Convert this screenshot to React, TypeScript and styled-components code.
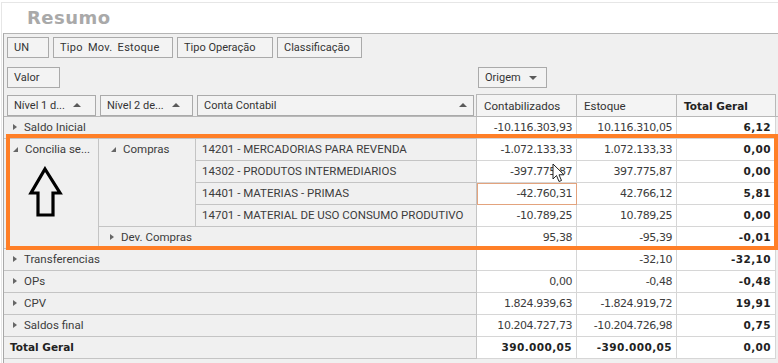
import React from "react";
import styled, { createGlobalStyle, css } from "styled-components";

const Global = createGlobalStyle`
  html, body { margin: 0; padding: 0; background: #ffffff; }
  body { font-family: Roboto, "Liberation Sans", Arial, sans-serif; color: #3a3a3a; }
  * { box-sizing: border-box; }
`;

const COLS = "95px 97px 281px 100px 100px 99px";

const Card = styled.div`
  position: relative;
  margin: 2px 0 0 1px;
  height: 361px;
  border-top: 1px solid #e6e6e6;
  border-left: 1px solid #e6e6e6;
  overflow: hidden;
`;

const Title = styled.div`
  height: 30px;
  line-height: 29px;
  padding-left: 25px;
  font-family: "DejaVu Sans", Verdana, sans-serif;
  font-weight: 700;
  font-size: 18px;
  letter-spacing: 0.5px;
  color: #a9a9a9;
`;

const Panel = styled.div`
  margin-left: 1px;
  height: 330px;
  background: #f0f0f0;
  border-top: 1px solid #b4b4b4;
  border-left: 1px solid #a8a8a8;
  display: flex;
  flex-direction: column;
`;

const FieldRow = styled.div`
  display: flex;
  gap: 4px;
  padding: 3px 0 0 3px;
`;

const FieldButton = styled.div<{ $w: number; $spaced?: boolean }>`
  width: ${(p) => p.$w}px;
  height: 21px;
  border: 1px solid #aaaaaa;
  background: #f3f3f3;
  display: flex;
  align-items: center;
  gap: 8px;
  padding: 0 6px;
  font-size: 11px;
  color: #333;
  white-space: nowrap;
  ${(p) =>
    p.$spaced &&
    css`
      word-spacing: 2px;
      letter-spacing: 0.3px;
    `}
`;

const Spacer = styled.span`
  flex: 1;
`;

const SortUp = styled.span`
  width: 0;
  height: 0;
  border-left: 4px solid transparent;
  border-right: 4px solid transparent;
  border-bottom: 4px solid #5a5a5a;
`;

const SortDown = styled.span`
  width: 0;
  height: 0;
  border-left: 4px solid transparent;
  border-right: 4px solid transparent;
  border-top: 4px solid #5a5a5a;
`;

const ChooserRow = styled.div`
  display: grid;
  grid-template-columns: ${COLS};
  margin-top: 9px;
  height: 21px;
`;

const HeaderRow = styled.div`
  display: grid;
  grid-template-columns: ${COLS};
  margin-top: 6px;
  height: 23px;
  border-bottom: 1px solid #b8b8b8;
  align-items: center;
`;

const Slot = styled.div<{ $span?: number; $pl?: number }>`
  grid-column: span ${(p) => p.$span ?? 1};
  padding-left: ${(p) => p.$pl ?? 0}px;
  display: flex;
  align-items: center;
  height: 100%;
`;

const ColHead = styled.div<{ $bold?: boolean }>`
  height: 22px;
  align-self: end;
  border: 1px solid #b8b8b8;
  border-bottom: none;
  margin-left: -1px;
  background: #f4f4f4;
  display: flex;
  align-items: center;
  padding-left: 7px;
  font-size: 11.5px;
  color: #333;
  ${(p) =>
    p.$bold &&
    css`
      font-family: "DejaVu Sans", sans-serif;
      font-weight: 700;
      font-size: 10.5px;
      color: #222;
    `}
`;

const DataGrid = styled.div`
  display: grid;
  grid-template-columns: ${COLS};
  grid-auto-rows: 22px;
`;

const LabelCell = styled.div<{
  $col: string;
  $row: string;
  $top?: boolean;
  $pl?: number;
  $bold?: boolean;
}>`
  grid-column: ${(p) => p.$col};
  grid-row: ${(p) => p.$row};
  background: #f0f0f0;
  border-right: 1px solid #c4c4c4;
  border-bottom: 1px solid #c4c4c4;
  display: flex;
  align-items: ${(p) => (p.$top ? "flex-start" : "center")};
  padding-top: ${(p) => (p.$top ? "3px" : "0")};
  padding-bottom: ${(p) => (p.$top ? "0" : "1px")};
  padding-left: ${(p) => p.$pl ?? 9}px;
  gap: 7px;
  font-size: 11.5px;
  color: #3c3c3c;
  white-space: nowrap;
  overflow: hidden;
  ${(p) =>
    p.$bold &&
    css`
      font-family: "DejaVu Sans", sans-serif;
      font-weight: 700;
      font-size: 10.5px;
      color: #222;
      padding-left: 6px;
    `}
`;

const ValueCell = styled.div<{ $bold?: boolean; $selected?: boolean }>`
  background: #ffffff;
  border-right: 1px solid #d6d6d6;
  border-bottom: 1px solid #d6d6d6;
  display: flex;
  align-items: center;
  justify-content: flex-end;
  padding: 0 4px 1px 0;
  font-family: "DejaVu Sans", sans-serif;
  font-size: 11px;
  letter-spacing: -0.45px;
  color: #3c3c3c;
  white-space: nowrap;
  ${(p) =>
    p.$bold &&
    css`
      font-weight: 700;
      font-size: 10.5px;
      letter-spacing: 0.4px;
      color: #222;
    `}
  ${(p) =>
    p.$selected &&
    css`
      outline: 1px solid #e3a37d;
      outline-offset: -1px;
    `}
`;

const Expander = styled.span<{ $open?: boolean }>`
  flex: none;
  width: 0;
  height: 0;
  ${(p) =>
    p.$open
      ? css`
          border-left: 5px solid transparent;
          border-bottom: 5px solid #666;
          margin-top: 5px;
        `
      : css`
          border-top: 3.5px solid transparent;
          border-bottom: 3.5px solid transparent;
          border-left: 4px solid #666;
        `}
`;

const Highlight = styled.div`
  position: absolute;
  left: 4px;
  top: 131px;
  width: 772px;
  height: 116px;
  border: 4px solid #ff7f27;
  pointer-events: none;
`;

const Overlay = styled.svg<{ $x: number; $y: number }>`
  position: absolute;
  left: ${(p) => p.$x}px;
  top: ${(p) => p.$y}px;
  pointer-events: none;
`;

type Row = {
  label: string;
  values: [string, string, string];
};

const topRows: Row[] = [
  { label: "Saldo Inicial", values: ["-10.116.303,93", "10.116.310,05", "6,12"] },
];

const contas: Row[] = [
  { label: "14201 - MERCADORIAS PARA REVENDA", values: ["-1.072.133,33", "1.072.133,33", "0,00"] },
  { label: "14302 - PRODUTOS INTERMEDIARIOS", values: ["-397.775,87", "397.775,87", "0,00"] },
  { label: "14401 - MATERIAS - PRIMAS", values: ["-42.760,31", "42.766,12", "5,81"] },
  { label: "14701 - MATERIAL DE USO CONSUMO PRODUTIVO", values: ["-10.789,25", "10.789,25", "0,00"] },
];

const bottomRows: Row[] = [
  { label: "Transferencias", values: ["", "-32,10", "-32,10"] },
  { label: "OPs", values: ["0,00", "-0,48", "-0,48"] },
  { label: "CPV", values: ["1.824.939,63", "-1.824.919,72", "19,91"] },
  { label: "Saldos final", values: ["10.204.727,73", "-10.204.726,98", "0,75"] },
];

function Values({ v, selectedFirst, boldAll }: { v: [string, string, string]; selectedFirst?: boolean; boldAll?: boolean }) {
  return (
    <>
      <ValueCell $bold={boldAll} $selected={selectedFirst}>{v[0]}</ValueCell>
      <ValueCell $bold={boldAll}>{v[1]}</ValueCell>
      <ValueCell $bold>{v[2]}</ValueCell>
    </>
  );
}

export default function App() {
  return (
    <>
      <Global />
      <Card>
        <Title>Resumo</Title>
        <Panel>
          <FieldRow>
            <FieldButton $w={42}>UN</FieldButton>
            <FieldButton $w={120} $spaced>Tipo Mov. Estoque</FieldButton>
            <FieldButton $w={96}>Tipo Operação</FieldButton>
            <FieldButton $w={85}>Classificação</FieldButton>
          </FieldRow>

          <ChooserRow>
            <Slot $span={3} $pl={3}>
              <FieldButton $w={53}>Valor</FieldButton>
            </Slot>
            <Slot $span={3} $pl={1}>
              <FieldButton $w={69}>
                Origem
                <SortDown />
              </FieldButton>
            </Slot>
          </ChooserRow>

          <HeaderRow>
            <Slot $pl={3}>
              <FieldButton $w={89}>
                Nível 1 d...
                <SortUp />
              </FieldButton>
            </Slot>
            <Slot $pl={1}>
              <FieldButton $w={93}>
                Nível 2 de...
                <SortUp />
              </FieldButton>
            </Slot>
            <Slot $pl={1}>
              <FieldButton $w={277}>
                Conta Contabil
                <Spacer />
                <SortUp />
              </FieldButton>
            </Slot>
            <ColHead>Contabilizados</ColHead>
            <ColHead>Estoque</ColHead>
            <ColHead $bold>Total Geral</ColHead>
          </HeaderRow>

          <DataGrid>
            {topRows.map((r) => (
              <React.Fragment key={r.label}>
                <LabelCell $col="1 / span 3" $row="1">
                  <Expander />
                  {r.label}
                </LabelCell>
                <Values v={r.values} />
              </React.Fragment>
            ))}

            <LabelCell $col="1" $row="2 / span 5" $top>
              <Expander $open />
              Concilia se...
            </LabelCell>
            <LabelCell $col="2" $row="2 / span 4" $top $pl={12}>
              <Expander $open />
              Compras
            </LabelCell>
            {contas.map((r, i) => (
              <React.Fragment key={r.label}>
                <LabelCell $col="3" $row={`${i + 2}`} $pl={6}>
                  {r.label}
                </LabelCell>
                <Values v={r.values} selectedFirst={i === 2} />
              </React.Fragment>
            ))}
            <LabelCell $col="2 / span 2" $row="6" $pl={11}>
              <Expander />
              Dev. Compras
            </LabelCell>
            <Values v={["95,38", "-95,39", "-0,01"]} />

            {bottomRows.map((r, i) => (
              <React.Fragment key={r.label}>
                <LabelCell $col="1 / span 3" $row={`${i + 7}`}>
                  <Expander />
                  {r.label}
                </LabelCell>
                <Values v={r.values} />
              </React.Fragment>
            ))}

            <LabelCell $col="1 / span 3" $row="11" $bold>
              Total Geral
            </LabelCell>
            <Values v={["390.000,05", "-390.000,05", "0,00"]} boldAll />
          </DataGrid>
        </Panel>

        <Highlight />

        <Overlay $x={26} $y={163} width="36" height="54" viewBox="0 0 36 54">
          <polygon
            points="17,3 32,27 25,27 25,49 10,49 10,27 3,27"
            fill="none"
            stroke="#000"
            strokeWidth="3.2"
            strokeLinejoin="miter"
          />
        </Overlay>

        <Overlay $x={550} $y={160} width="14" height="21" viewBox="0 0 14 21">
          <path
            d="M1 1 L1 16 L4.5 12.5 L7 18.5 L9.5 17.5 L7 11.8 L12 11.8 Z"
            fill="#ffffff"
            stroke="#222"
            strokeWidth="1"
            strokeLinejoin="round"
          />
        </Overlay>
      </Card>
    </>
  );
}
